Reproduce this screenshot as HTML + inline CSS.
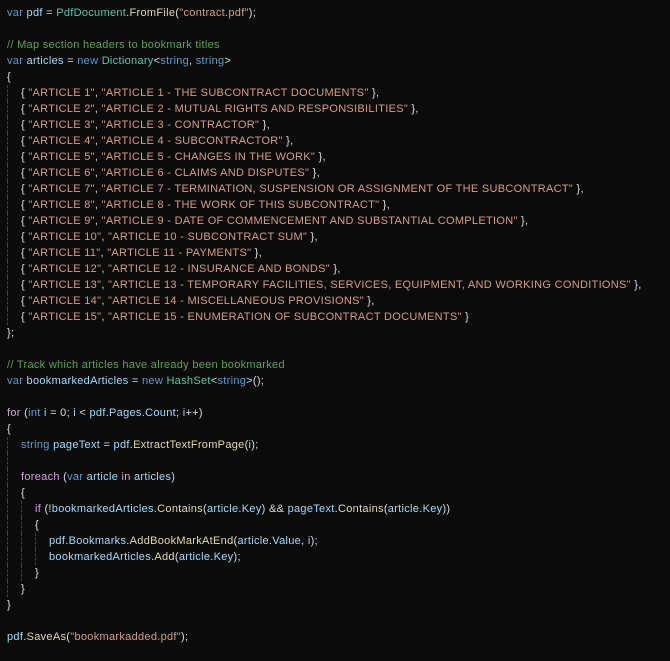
<!DOCTYPE html>
<html><head><meta charset="utf-8"><style>
html,body{margin:0;padding:0;background:#0b0b0b;width:670px;height:661px;overflow:hidden}
pre{margin:0;padding:5px 0 0 7px;font-family:"Liberation Sans",sans-serif;font-size:11px;line-height:16px;letter-spacing:0.3px;color:#dcdcdc;white-space:pre}
.l{display:block;height:16px;position:relative}
.g{display:inline-block;width:14px;height:16px;vertical-align:top;border-left:1px dashed #404040;box-sizing:border-box;margin-left:0}
.k{color:#569cd6}.v{color:#9cdcfe}.t{color:#4ec9b0}.m{color:#dcdcaa}.s{color:#d69d85}.c{color:#57a64a}.p{color:#d8a0df}
</style></head><body><pre>
<span class="l"><span class="k">var</span> <span class="v">pdf</span> = <span class="t">PdfDocument</span>.<span class="m">FromFile</span>(<span class="s">"contract.pdf"</span>);</span><span class="l"></span><span class="l"><span class="c">// Map section headers to bookmark titles</span></span><span class="l"><span class="k">var</span> <span class="v">articles</span> = <span class="k">new</span> <span class="t">Dictionary</span>&lt;<span class="k">string</span>, <span class="k">string</span>&gt;</span><span class="l">{</span><span class="l"><span class="g"></span>{ <span class="s">"ARTICLE 1"</span>, <span class="s">"ARTICLE 1 - THE SUBCONTRACT DOCUMENTS"</span> },</span><span class="l"><span class="g"></span>{ <span class="s">"ARTICLE 2"</span>, <span class="s">"ARTICLE 2 - MUTUAL RIGHTS AND RESPONSIBILITIES"</span> },</span><span class="l"><span class="g"></span>{ <span class="s">"ARTICLE 3"</span>, <span class="s">"ARTICLE 3 - CONTRACTOR"</span> },</span><span class="l"><span class="g"></span>{ <span class="s">"ARTICLE 4"</span>, <span class="s">"ARTICLE 4 - SUBCONTRACTOR"</span> },</span><span class="l"><span class="g"></span>{ <span class="s">"ARTICLE 5"</span>, <span class="s">"ARTICLE 5 - CHANGES IN THE WORK"</span> },</span><span class="l"><span class="g"></span>{ <span class="s">"ARTICLE 6"</span>, <span class="s">"ARTICLE 6 - CLAIMS AND DISPUTES"</span> },</span><span class="l"><span class="g"></span>{ <span class="s">"ARTICLE 7"</span>, <span class="s">"ARTICLE 7 - TERMINATION, SUSPENSION OR ASSIGNMENT OF THE SUBCONTRACT"</span> },</span><span class="l"><span class="g"></span>{ <span class="s">"ARTICLE 8"</span>, <span class="s">"ARTICLE 8 - THE WORK OF THIS SUBCONTRACT"</span> },</span><span class="l"><span class="g"></span>{ <span class="s">"ARTICLE 9"</span>, <span class="s">"ARTICLE 9 - DATE OF COMMENCEMENT AND SUBSTANTIAL COMPLETION"</span> },</span><span class="l"><span class="g"></span>{ <span class="s">"ARTICLE 10"</span>, <span class="s">"ARTICLE 10 - SUBCONTRACT SUM"</span> },</span><span class="l"><span class="g"></span>{ <span class="s">"ARTICLE 11"</span>, <span class="s">"ARTICLE 11 - PAYMENTS"</span> },</span><span class="l"><span class="g"></span>{ <span class="s">"ARTICLE 12"</span>, <span class="s">"ARTICLE 12 - INSURANCE AND BONDS"</span> },</span><span class="l"><span class="g"></span>{ <span class="s">"ARTICLE 13"</span>, <span class="s">"ARTICLE 13 - TEMPORARY FACILITIES, SERVICES, EQUIPMENT, AND WORKING CONDITIONS"</span> },</span><span class="l"><span class="g"></span>{ <span class="s">"ARTICLE 14"</span>, <span class="s">"ARTICLE 14 - MISCELLANEOUS PROVISIONS"</span> },</span><span class="l"><span class="g"></span>{ <span class="s">"ARTICLE 15"</span>, <span class="s">"ARTICLE 15 - ENUMERATION OF SUBCONTRACT DOCUMENTS"</span> }</span><span class="l">};</span><span class="l"></span><span class="l"><span class="c">// Track which articles have already been bookmarked</span></span><span class="l"><span class="k">var</span> <span class="v">bookmarkedArticles</span> = <span class="k">new</span> <span class="t">HashSet</span>&lt;<span class="k">string</span>&gt;();</span><span class="l"></span><span class="l"><span class="p">for</span> (<span class="k">int</span> <span class="v">i</span> = 0; <span class="v">i</span> &lt; <span class="v">pdf</span>.<span class="v">Pages</span>.<span class="v">Count</span>; <span class="v">i</span>++)</span><span class="l">{</span><span class="l"><span class="g"></span><span class="k">string</span> <span class="v">pageText</span> = <span class="v">pdf</span>.<span class="m">ExtractTextFromPage</span>(<span class="v">i</span>);</span><span class="l"><span class="g"></span></span><span class="l"><span class="g"></span><span class="p">foreach</span> (<span class="k">var</span> <span class="v">article</span> <span class="p">in</span> <span class="v">articles</span>)</span><span class="l"><span class="g"></span>{</span><span class="l"><span class="g"></span><span class="g"></span><span class="p">if</span> (!<span class="v">bookmarkedArticles</span>.<span class="m">Contains</span>(<span class="v">article</span>.<span class="v">Key</span>) &amp;&amp; <span class="v">pageText</span>.<span class="m">Contains</span>(<span class="v">article</span>.<span class="v">Key</span>))</span><span class="l"><span class="g"></span><span class="g"></span>{</span><span class="l"><span class="g"></span><span class="g"></span><span class="g"></span><span class="v">pdf</span>.<span class="v">Bookmarks</span>.<span class="m">AddBookMarkAtEnd</span>(<span class="v">article</span>.<span class="v">Value</span>, <span class="v">i</span>);</span><span class="l"><span class="g"></span><span class="g"></span><span class="g"></span><span class="v">bookmarkedArticles</span>.<span class="m">Add</span>(<span class="v">article</span>.<span class="v">Key</span>);</span><span class="l"><span class="g"></span><span class="g"></span>}</span><span class="l"><span class="g"></span>}</span><span class="l">}</span><span class="l"></span><span class="l"><span class="v">pdf</span>.<span class="m">SaveAs</span>(<span class="s">"bookmarkadded.pdf"</span>);</span></pre></body></html>
